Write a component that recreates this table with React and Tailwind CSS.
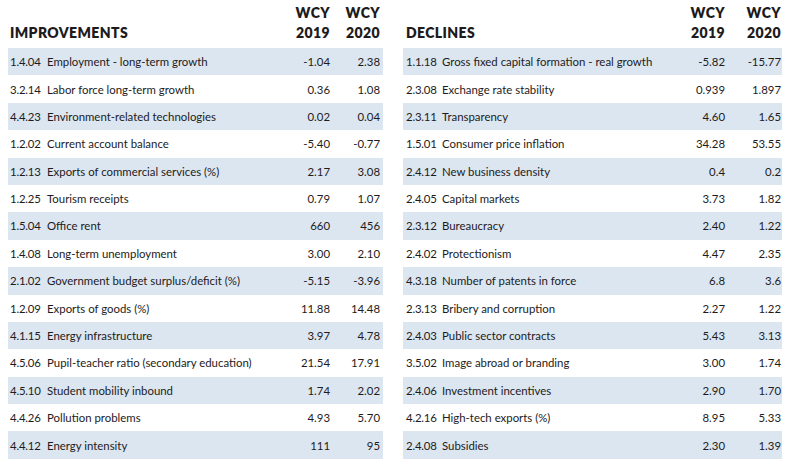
const improvements = [
  ["1.4.04", "Employment - long-term growth", "-1.04", "2.38"],
  ["3.2.14", "Labor force long-term growth", "0.36", "1.08"],
  ["4.4.23", "Environment-related technologies", "0.02", "0.04"],
  ["1.2.02", "Current account balance", "-5.40", "-0.77"],
  ["1.2.13", "Exports of commercial services (%)", "2.17", "3.08"],
  ["1.2.25", "Tourism receipts", "0.79", "1.07"],
  ["1.5.04", "Office rent", "660", "456"],
  ["1.4.08", "Long-term unemployment", "3.00", "2.10"],
  ["2.1.02", "Government budget surplus/deficit (%)", "-5.15", "-3.96"],
  ["1.2.09", "Exports of goods (%)", "11.88", "14.48"],
  ["4.1.15", "Energy infrastructure", "3.97", "4.78"],
  ["4.5.06", "Pupil-teacher ratio (secondary education)", "21.54", "17.91"],
  ["4.5.10", "Student mobility inbound", "1.74", "2.02"],
  ["4.4.26", "Pollution problems", "4.93", "5.70"],
  ["4.4.12", "Energy intensity", "111", "95"],
];

const declines = [
  ["1.1.18", "Gross fixed capital formation - real growth", "-5.82", "-15.77"],
  ["2.3.08", "Exchange rate stability", "0.939", "1.897"],
  ["2.3.11", "Transparency", "4.60", "1.65"],
  ["1.5.01", "Consumer price inflation", "34.28", "53.55"],
  ["2.4.12", "New business density", "0.4", "0.2"],
  ["2.4.05", "Capital markets", "3.73", "1.82"],
  ["2.3.12", "Bureaucracy", "2.40", "1.22"],
  ["2.4.02", "Protectionism", "4.47", "2.35"],
  ["4.3.18", "Number of patents in force", "6.8", "3.6"],
  ["2.3.13", "Bribery and corruption", "2.27", "1.22"],
  ["2.4.03", "Public sector contracts", "5.43", "3.13"],
  ["3.5.02", "Image abroad or branding", "3.00", "1.74"],
  ["2.4.06", "Investment incentives", "2.90", "1.70"],
  ["4.2.16", "High-tech exports (%)", "8.95", "5.33"],
  ["2.4.08", "Subsidies", "2.30", "1.39"],
];

function Table({ title, rows, codeCls, col1Cls, col2Cls }) {
  return (
    <div className="flex flex-col">
      <div className="flex h-[48px] font-extrabold text-[14px] leading-[20px] tracking-[0.4px]">
        <div className={`flex-1 flex items-end pb-[5px] ${codeCls}`}>{title}</div>
        <div className={`flex flex-col items-end justify-end pb-[5px] ${col1Cls}`}>
          <span>WCY</span>
          <span>2019</span>
        </div>
        <div className={`flex flex-col items-end justify-end pb-[5px] ${col2Cls}`}>
          <span>WCY</span>
          <span>2020</span>
        </div>
      </div>
      {rows.map((r, i) => (
        <div
          key={r[0]}
          className={`flex items-center h-[27.4px] text-[11.4px] ${i % 2 === 0 ? "bg-[#dce6f1]" : ""}`}
        >
          <div className={`w-[39px] shrink-0 tracking-[-0.2px] ${codeCls}`}>{r[0]}</div>
          <div className="flex-1 whitespace-nowrap">{r[1]}</div>
          <div className={`text-right ${col1Cls}`}>{r[2]}</div>
          <div className={`text-right ${col2Cls}`}>{r[3]}</div>
        </div>
      ))}
    </div>
  );
}

export default function App() {
  return (
    <div
      className="w-[793px] h-[472px] bg-white text-[#1d1b1c] flex gap-[20px] pl-[8px] overflow-hidden"
      style={{ fontFamily: "Lato, 'Open Sans', sans-serif" }}
    >
      <div className="w-[375px]">
        <Table
          title="IMPROVEMENTS"
          rows={improvements}
          codeCls="pl-[2px]"
          col1Cls="w-[50px] text-right"
          col2Cls="w-[53px] pr-[3px] text-right"
        />
      </div>
      <div className="w-[379px]">
        <Table
          title="DECLINES"
          rows={declines}
          codeCls="pl-[3px]"
          col1Cls="w-[50px] text-right"
          col2Cls="w-[57px] pr-[1px] text-right"
        />
      </div>
    </div>
  );
}
